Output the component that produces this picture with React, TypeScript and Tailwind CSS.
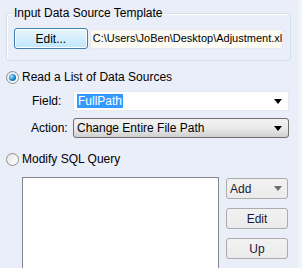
import React from "react";

const font = { fontFamily: '"Liberation Sans", Arial, sans-serif' };

const Radio = ({ checked }: { checked?: boolean }) => (
  <span className="flex items-center justify-center w-[13px] h-[13px] rounded-full border border-[#8e8f8f] bg-gradient-to-br from-[#e6e6e6] to-[#ffffff]">
    {checked && (
      <span className="w-[7px] h-[7px] rounded-full bg-[radial-gradient(circle_at_35%_35%,#a9e3ff,#1c84c8_55%,#0b4f86)]" />
    )}
  </span>
);

const Arrow = ({ color = "#000" }: { color?: string }) => (
  <svg width="8" height="5" viewBox="0 0 8 5" className="shrink-0">
    <path d="M0 0h8L4 5z" fill={color} />
  </svg>
);

const SideButton = ({ label }: { label: string }) => (
  <button className="w-[62px] h-[21px] rounded-[3px] border border-[#acacac] bg-gradient-to-b from-[#f2f2f2] to-[#ebebeb] text-[12px] text-[#1a1a3c] leading-none">
    {label}
  </button>
);

export default function App() {
  return (
    <div
      className="w-[302px] h-[268px] flex overflow-hidden bg-[#e9eef9] text-black text-[12px]"
      style={font}
    >
      <div className="w-[298px] flex flex-col [&>*]:shrink-0">
        {/* group box */}
        <div className="relative ml-[6px] mt-[13px] w-[285px] h-[48px] border border-[#d5dfe5] rounded-[3px] shadow-[inset_1px_1px_0_#fff] px-[7px]">
          <span className="absolute left-[6px] top-[-8px] px-[1px] leading-[14px] bg-[#e9eef9]">
            Input Data Source Template
          </span>
          <div className="flex items-center mt-[14px] gap-[2px]">
            <button className="w-[74px] h-[21px] rounded-[3px] border border-[#3c7fb1] bg-gradient-to-b from-[#eaf6fd] to-[#bee6fd] shadow-[inset_0_0_0_1px_#fff]">
              Edit...
            </button>
            <div className="w-[194px] h-[20px] border border-[#e3e9ef] bg-[#fbfbf4] pl-[2px] flex items-center overflow-hidden whitespace-nowrap text-[11px]">
              C:\Users\JoBen\Desktop\Adjustment.xlsx
            </div>
          </div>
        </div>

        <label className="flex items-center gap-[3px] ml-[6px] mt-[9px] h-[14px]">
          <Radio checked />
          <span>Read a List of Data Sources</span>
        </label>

        <div className="flex items-center mt-[7px] ml-[32px] h-[20px]">
          <span className="w-[41px]">Field:</span>
          <div className="w-[216px] h-[20px] border border-[#e3e9ef] bg-white flex items-center justify-between pl-[3px] pr-[6px]">
            <span className="bg-[#3399ff] text-white px-[1px] leading-[14px]">
              FullPath
            </span>
            <Arrow />
          </div>
        </div>

        <div className="flex items-center mt-[7px] ml-[31px] h-[20px]">
          <span className="w-[42px]">Action:</span>
          <div className="w-[216px] h-[20px] rounded-[3px] border border-[#707070] bg-gradient-to-b from-[#f2f2f2] via-[#ebebeb] to-[#cfcfcf] flex items-center justify-between pl-[3px] pr-[6px]">
            <span>Change Entire File Path</span>
            <Arrow />
          </div>
        </div>

        <label className="flex items-center gap-[3px] ml-[6px] mt-[14px] h-[14px]">
          <Radio />
          <span>Modify SQL Query</span>
        </label>

        <div className="flex ml-[22px] mt-[11px] gap-[7px]">
          <div className="w-[197px] h-[100px] border border-[#828790] bg-white" />
          <div className="flex flex-col gap-[9px] mt-[1px]">
            <button className="w-[62px] h-[21px] rounded-[3px] border border-[#acacac] bg-gradient-to-b from-[#f2f2f2] to-[#ebebeb] text-[12px] text-[#1a1a3c] flex items-center justify-between pl-[3px] pr-[5px]">
              <span>Add</span>
              <Arrow color="#6d6d6d" />
            </button>
            <SideButton label="Edit" />
            <SideButton label="Up" />
          </div>
        </div>
      </div>
      <div className="flex-1 bg-[#f1f4fb]" />
    </div>
  );
}
